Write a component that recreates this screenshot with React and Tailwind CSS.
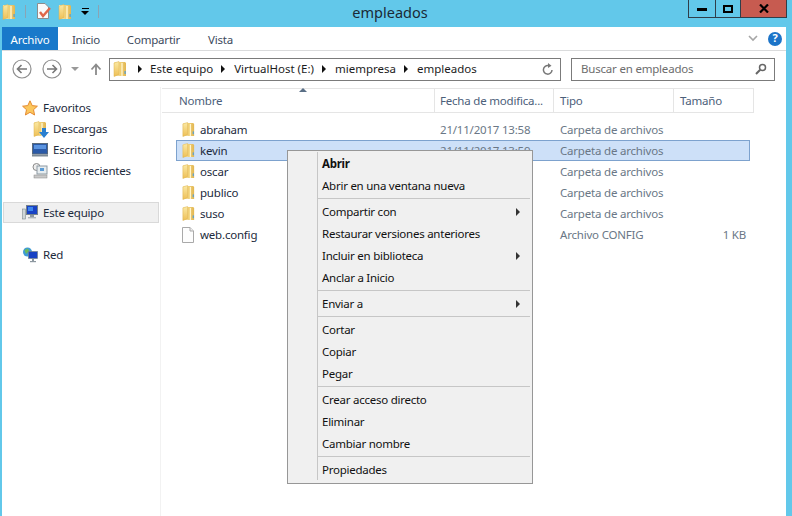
import React from 'react';

const FONT = '[font-family:"Noto_Sans",sans-serif]';

function Folder({ size = 16 }) {
  return (
    <svg width={size} height={size} viewBox="0 0 16 16" className="shrink-0">
      <defs>
        <linearGradient id="leaf" x1="0" y1="0" x2="0" y2="1">
          <stop offset="0" stopColor="#fbeaa6" />
          <stop offset="1" stopColor="#eebf55" />
        </linearGradient>
        <linearGradient id="back" x1="0" y1="0" x2="1" y2="0">
          <stop offset="0" stopColor="#fdf3c4" />
          <stop offset="1" stopColor="#e3b64e" />
        </linearGradient>
      </defs>
      <path d="M2 1 H13 L14 2 V15 H2 Z" fill="url(#back)" />
      <path d="M2 2 L7 .5 V13.5 L2 15.5 Z" fill="url(#leaf)" stroke="#dcb04c" strokeWidth="0.5" />
      <path d="M7.5 1 H9.5 V14.5 H7.5 Z" fill="#f0cf73" />
      <path d="M10 2 V15" stroke="#fff6cf" strokeWidth="1.3" />
      <rect x="12.5" y="10" width="1.2" height="3" fill="#4f9fd8" />
    </svg>
  );
}

function FileIcon() {
  return (
    <svg width="14" height="16" viewBox="0 0 14 16" className="shrink-0">
      <path d="M1.5 .5 H9 L12.5 4 V15.5 H1.5 Z" fill="#fdfdfd" stroke="#a9a9a9" />
      <path d="M9 .5 V4 H12.5" fill="#eee" stroke="#a9a9a9" />
    </svg>
  );
}

function NavButton({ flip }) {
  return (
    <svg width="20" height="20" viewBox="0 0 20 20" className="shrink-0">
      <circle cx="10" cy="10" r="9" fill="#fff" stroke="#8f8f8f" strokeWidth="1.2" />
      <path
        d={flip ? 'M5 10 H14 M10.5 6 L14.5 10 L10.5 14' : 'M15 10 H6 M9.5 6 L5.5 10 L9.5 14'}
        fill="none"
        stroke="#777"
        strokeWidth="1.6"
      />
    </svg>
  );
}

function Crumb() {
  return <span className="ml-[8px] mr-[9px] h-0 w-0 border-y-[4px] border-l-[4px] border-y-transparent border-l-[#111]" />;
}

function QuickAccess() {
  return (
    <div className="flex items-center">
      <div className="ml-[1px]"><Folder /></div>
      <span className="ml-[8px] h-[13px] w-px bg-[#8aa4b4]" />
      <svg width="16" height="17" viewBox="0 0 16 17" className="ml-[10px]">
        <path d="M1.5 .5 H9 L12.5 4 V15.5 H1.5 Z" fill="#fafafa" stroke="#8d8d8d" />
        <path d="M4 9 L7 13 L14 5" fill="none" stroke="#e0674a" strokeWidth="2.4" />
      </svg>
      <div className="ml-[5px]"><Folder /></div>
      <div className="ml-[8px] flex flex-col items-center gap-[2px]">
        <span className="h-px w-[7px] bg-black" />
        <span className="h-0 w-0 border-x-[4px] border-t-[4px] border-x-transparent border-t-black" />
      </div>
      <span className="ml-[9px] h-[13px] w-px bg-[#8aa4b4]" />
    </div>
  );
}

function TitleBar() {
  return (
    <div className="relative flex h-[27px] items-start pt-[3px]">
      <QuickAccess />
      <div className="absolute left-0 right-[12px] top-[2px] text-center text-[14.5px] leading-[20px] tracking-normal text-[#1a2a36]">empleados</div>
      <div className="absolute right-[5px] top-0 flex h-[18px] border border-t-0 border-[#2f3e4a]">
        <div className="flex w-[27px] items-center justify-center border-r border-[#2f3e4a]">
          <span className="mt-[2px] h-[3px] w-[10px] bg-black" />
        </div>
        <div className="flex w-[25px] items-center justify-center border-r border-[#2f3e4a]">
          <span className="h-[8px] w-[10px] border-2 border-black" />
        </div>
        <div className="flex w-[45px] items-center justify-center bg-[#c75b50]">
          <svg width="10" height="9" viewBox="0 0 10 9">
            <path d="M1 .5 L9 8.5 M9 .5 L1 8.5" stroke="#000" strokeWidth="2.2" />
          </svg>
        </div>
      </div>
    </div>
  );
}

function Ribbon() {
  return (
    <div className="flex h-[24px] items-stretch border-b border-[#dadbdc] text-[#3c4a5c]">
      <div className="flex w-[56px] items-center justify-center bg-[#1979ca] pt-[2px] text-white">Archivo</div>
      <div className="flex w-[56px] items-center justify-center pt-[2px]">Inicio</div>
      <div className="flex w-[79px] items-center justify-center pt-[2px]">Compartir</div>
      <div className="flex w-[55px] items-center justify-center pt-[2px]">Vista</div>
      <div className="ml-auto mr-[4px] flex items-center gap-[10px]">
        <svg width="10" height="7" viewBox="0 0 10 7">
          <path d="M1 1 L5 5 L9 1" fill="none" stroke="#a6a6a6" strokeWidth="1.6" />
        </svg>
        <div className="flex h-[14px] w-[14px] items-center justify-center rounded-full bg-[#1c74c8] text-[11px] font-bold text-white">?</div>
      </div>
    </div>
  );
}

function AddressBar() {
  return (
    <div className="flex h-[36px] items-center pl-[10px] pr-[11px]">
      <NavButton />
      <div className="ml-[10px]"><NavButton flip /></div>
      <span className="ml-[9px] h-0 w-0 border-x-[4px] border-t-[4px] border-x-transparent border-t-[#999]" />
      <svg width="12" height="13" viewBox="0 0 12 13" className="ml-[11px]">
        <path d="M6 12 V2 M1.5 6.5 L6 1.5 L10.5 6.5" fill="none" stroke="#8b8b8b" strokeWidth="1.8" />
      </svg>
      <div className="ml-[7px] flex h-[23px] flex-1 items-center border border-[#7b7b7b] pl-[2px] pr-[6px] tracking-normal text-[#1c1c1c]">
        <Folder />
        <span className="ml-[10px] mr-[8px] h-0 w-0 border-y-[4px] border-l-[4px] border-y-transparent border-l-[#111]" />
        <span>Este equipo</span>
        <Crumb />
        <span>VirtualHost (E:)</span>
        <Crumb />
        <span>miempresa</span>
        <Crumb />
        <span>empleados</span>
        <svg width="12" height="13" viewBox="0 0 12 13" className="ml-auto">
          <path d="M10 7 A4.3 4.3 0 1 1 6.5 2.6" fill="none" stroke="#777" strokeWidth="1.5" />
          <path d="M6 0 L9.5 2.7 L6 5 Z" fill="#777" />
        </svg>
      </div>
      <div className="ml-[10px] flex h-[23px] w-[204px] items-center border border-[#7b7b7b] pl-[9px] pr-[7px] text-[#6d6d6d]">
        <span>Buscar en empleados</span>
        <svg width="12" height="12" viewBox="0 0 12 12" className="ml-auto">
          <circle cx="7.5" cy="4.5" r="3" fill="none" stroke="#666" strokeWidth="1.5" />
          <path d="M5.2 6.8 L1 11" stroke="#666" strokeWidth="2" />
        </svg>
      </div>
    </div>
  );
}

function NavIcon({ type }) {
  if (type === 'star') {
    return (
      <svg width="16" height="16" viewBox="0 0 16 16" className="shrink-0">
        <path d="M8 .8 L10.2 5.6 L15.4 6.2 L11.5 9.7 L12.6 15 L8 12.3 L3.4 15 L4.5 9.7 L.6 6.2 L5.8 5.6 Z" fill="#fbc75d" stroke="#e58a32" />
      </svg>
    );
  }
  if (type === 'down') {
    return (
      <div className="relative h-[16px] w-[16px] shrink-0">
        <Folder />
        <svg width="10" height="10" viewBox="0 0 10 10" className="absolute -bottom-[1px] -right-[1px]">
          <path d="M3 0 H7 V4 H10 L5 10 L0 4 H3 Z" fill="#2a7fd0" />
        </svg>
      </div>
    );
  }
  if (type === 'desk') {
    return (
      <svg width="16" height="14" viewBox="0 0 16 14" className="shrink-0">
        <rect x=".5" y=".5" width="15" height="10.5" fill="#2a5aa8" stroke="#5a6b7d" />
        <rect x="2" y="2" width="12" height="4" fill="#5b94e0" />
        <rect x="0" y="11.5" width="16" height="2" fill="#7f8b96" />
      </svg>
    );
  }
  if (type === 'recent') {
    return (
      <svg width="16" height="16" viewBox="0 0 16 16" className="shrink-0">
        <circle cx="4.5" cy="4" r="3.5" fill="#eee" stroke="#8a8a8a" />
        <rect x="5" y="3" width="10" height="8" fill="#e6ecef" stroke="#8d9aa3" />
        <rect x="8" y="5" width="4" height="3" fill="#5b9bd5" />
        <rect x="2" y="12" width="13" height="3" fill="#c9c9c9" stroke="#888" strokeWidth="0.5" />
      </svg>
    );
  }
  if (type === 'pc') {
    return (
      <svg width="16" height="15" viewBox="0 0 16 15" className="shrink-0">
        <rect x=".5" y="4" width="3" height="10" fill="#cfd6d8" stroke="#7d8a8f" strokeWidth="0.6" />
        <rect x="4.5" y=".5" width="11" height="9" fill="#1842c4" stroke="#74828c" />
        <rect x="6" y="2" width="5" height="4" fill="#3d86ee" />
        <rect x="8" y="10" width="4" height="2" fill="#8d98a0" />
        <rect x="6" y="12" width="8" height="1.4" fill="#aeb6bb" />
      </svg>
    );
  }
  return (
    <svg width="16" height="16" viewBox="0 0 16 16" className="shrink-0">
      <circle cx="5.5" cy="5" r="4.5" fill="#3f9bd6" />
      <path d="M2.5 3 L6 1.5 L7 4 L4 7 Z" fill="#6dbb5a" />
      <rect x="6.5" y="4.5" width="9" height="7" fill="#1842c4" stroke="#74828c" strokeWidth="0.7" />
      <rect x="10" y="12" width="2" height="2" fill="#8d98a0" />
      <rect x="8" y="14" width="6" height="1.2" fill="#8d98a0" />
    </svg>
  );
}

function NavItem({ icon, label, sub, active }) {
  return (
    <div
      className={`flex h-[21px] items-center border ${active ? 'mr-[1px] border-[#d9d9d9] bg-[#f0f0f0]' : 'border-transparent'} ${sub ? 'pl-[28px]' : 'pl-[18px]'}`}
    >
      <div className="flex w-[21px] justify-start"><NavIcon type={icon} /></div>
      <span className="text-[#1c2a3c]">{label}</span>
    </div>
  );
}

function NavPane() {
  return (
    <div className="w-[159px] shrink-0 border-r border-[#f2f2f2] pl-[1px] pt-[10px]">
      <div className="mr-[1px]">
        <NavItem icon="star" label="Favoritos" />
        <NavItem icon="down" label="Descargas" sub />
        <NavItem icon="desk" label="Escritorio" sub />
        <NavItem icon="recent" label="Sitios recientes" sub />
      </div>
      <div className="mt-[21px]">
        <NavItem icon="pc" label="Este equipo" active />
      </div>
      <div className="mt-[21px]">
        <NavItem icon="net" label="Red" />
      </div>
    </div>
  );
}

const files = [
  { name: 'abraham', date: '21/11/2017 13:58', type: 'Carpeta de archivos' },
  { name: 'kevin', date: '21/11/2017 13:59', type: 'Carpeta de archivos', selected: true },
  { name: 'oscar', date: '', type: 'Carpeta de archivos' },
  { name: 'publico', date: '', type: 'Carpeta de archivos' },
  { name: 'suso', date: '', type: 'Carpeta de archivos' },
  { name: 'web.config', date: '', type: 'Archivo CONFIG', size: '1 KB', file: true },
];

function FileRow({ f }) {
  return (
    <div
      className={`flex h-[21px] w-[574px] items-center border ${f.selected ? 'border-[#7da2ce] bg-[#cde0f8]' : 'border-transparent'}`}
    >
      <div className="flex w-[263px] items-center gap-[5px] pl-[4px] text-[#1c2a3c]">
        <div className="flex w-[14px] justify-center">{f.file ? <FileIcon /> : <Folder size={15} />}</div>
        <span>{f.name}</span>
      </div>
      <div className="w-[120px] overflow-hidden whitespace-nowrap text-[#6a7786]">{f.date}</div>
      <div className="w-[104px] whitespace-nowrap text-[#6a7786]">{f.type}</div>
      <div className="w-[82px] text-right text-[#6a7786]">{f.size}</div>
    </div>
  );
}

function FileList() {
  return (
    <div className="relative flex-1 pl-[1px] pt-[1px]">
      <div className="flex h-[25px] w-[592px] border-y border-[#e5e5e5] text-[#4c607a]">
        <div className="relative flex w-[273px] items-center border-r border-[#e5e5e5] pl-[17px]">
          Nombre
          <span className="absolute left-[137px] -top-[1px] h-0 w-0 border-x-[4px] border-b-[4px] border-x-transparent border-b-[#5a6f86]" />
        </div>
        <div className="flex w-[119px] items-center border-r border-[#e5e5e5] pl-[5px]">Fecha de modifica...</div>
        <div className="flex w-[120px] items-center border-r border-[#e5e5e5] pl-[6px]">Tipo</div>
        <div className="flex flex-1 items-center border-r border-[#e5e5e5] pl-[6px]">Tamaño</div>
      </div>
      <div className="ml-[14px] mt-[6px]">
        {files.map(f => <FileRow key={f.name} f={f} />)}
      </div>
    </div>
  );
}

const menu = [
  [{ label: 'Abrir', bold: true }, { label: 'Abrir en una ventana nueva' }],
  [{ label: 'Compartir con', sub: true }, { label: 'Restaurar versiones anteriores' }, { label: 'Incluir en biblioteca', sub: true }, { label: 'Anclar a Inicio' }],
  [{ label: 'Enviar a', sub: true }],
  [{ label: 'Cortar' }, { label: 'Copiar' }, { label: 'Pegar' }],
  [{ label: 'Crear acceso directo' }, { label: 'Eliminar' }, { label: 'Cambiar nombre' }],
  [{ label: 'Propiedades' }],
];

function ContextMenu() {
  return (
    <div className="absolute left-[287px] top-[150px] w-[246px] border border-[#979797] bg-[#f0f0f0] pb-[3px] pl-[29px] pr-[2px] pt-[1px] tracking-[-0.25px] text-[#111]">
      <div className="flex flex-col border-l border-[#c6c6c6]">
        {menu.map((group, i) => (
          <div key={i}>
            {i > 0 && (
              <div className="flex h-[4px] items-center pt-[1px]">
                <span className="h-px w-full bg-[#c6c6c6]" />
              </div>
            )}
            {group.map(item => (
              <div key={item.label} className="flex h-[22px] items-center pl-[4px] pr-[10px] pt-[2px]">
                <span className={item.bold ? 'font-bold' : ''}>{item.label}</span>
                {item.sub && (
                  <span className="ml-auto h-0 w-0 border-y-[4px] border-l-[4px] border-y-transparent border-l-[#333]" />
                )}
              </div>
            ))}
          </div>
        ))}
      </div>
    </div>
  );
}

export default function App() {
  return (
    <div className={`relative flex h-[516px] w-[792px] flex-col overflow-hidden bg-[#62c8ea] text-[11.5px] tracking-[-0.2px] ${FONT}`}>
      <TitleBar />
      <div className="ml-[2px] mr-[6px] flex flex-1 flex-col bg-white">
        <Ribbon />
        <AddressBar />
        <div className="flex flex-1">
          <NavPane />
          <FileList />
        </div>
      </div>
      <ContextMenu />
    </div>
  );
}
